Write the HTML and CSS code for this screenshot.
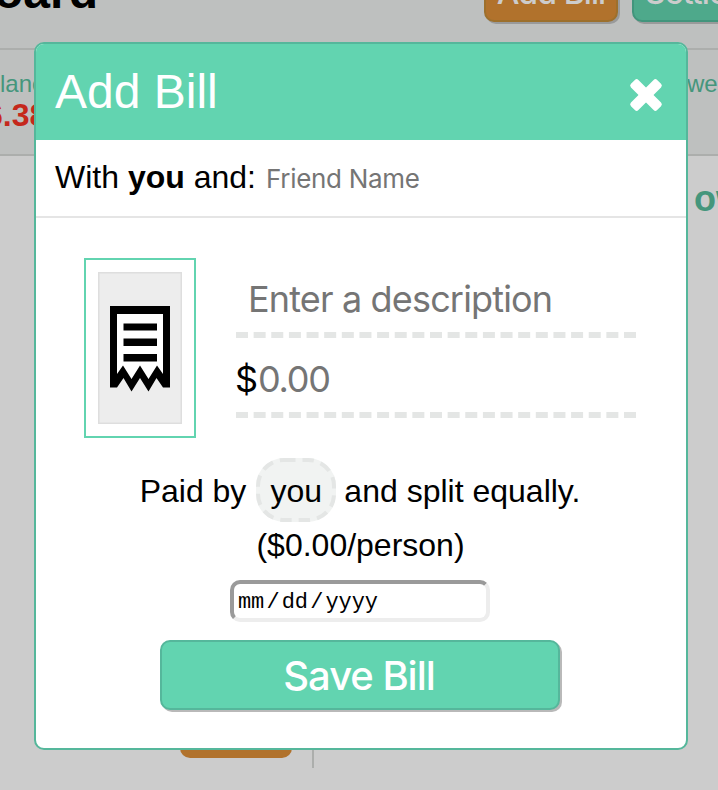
FILE: index.html
```html
<!DOCTYPE html>
<html lang="en">
<head>
<meta charset="utf-8">
<title>Dashboard</title>
<link rel="stylesheet" href="styles.css">
</head>
<body>
<main class="page">
  <header class="topbar">
    <h1 class="page-title">board</h1>
    <div class="actions">
      <span class="btn btn-orange">Add Bill</span>
      <span class="btn btn-green">Settle</span>
    </div>
  </header>
  <section class="summary">
    <div class="balance"><span class="label">lance</span><strong class="amount">6.38</strong></div>
    <span class="label owed">wed</span>
  </section>
  <section class="columns">
    <div class="column column-left"><span class="stub"></span></div>
    <div class="column column-right"><h2 class="column-title">ow</h2></div>
  </section>
</main>
<div class="modal">
  <header class="modal-head">
    <span class="modal-title">Add Bill</span>
    <svg class="close" viewBox="-16 -16 32 32"><rect x="-18.5" y="-5.25" width="37" height="10.5" rx="2.5" transform="rotate(45)"/><rect x="-18.5" y="-5.25" width="37" height="10.5" rx="2.5" transform="rotate(-45)"/></svg>
  </header>
  <div class="with-row">
    <span class="with">With <b>you</b> and:</span>
    <span class="friend">Friend Name</span>
  </div>
  <div class="bill">
    <div class="receipt">
      <svg class="receipt-image" viewBox="0 0 84 152">
        <rect class="plate" x=".75" y=".75" width="82.5" height="150.5"/>
        <path class="paper" d="M15.5 38V110H17L24.5 99L33 113L41.5 99L50 113L58.500 99L66 110H68V38Z"/>
        <path class="ink" fill-rule="evenodd" d="M12 34H72V115.500H65L58.500 106L50.500 119.500L42 106L33.500 119.500L25.500 106L19 115.500H12ZM19 42V102L25 93.500L33.500 107L42 93.500L50.500 107L59 93.500L65 102V42Z"/>
        <path class="ink" d="M25.500 51.500H59V58.500H25.500ZM25.500 66.500H59V74H25.500ZM25.500 82H59V89.500H25.500Z"/>
      </svg>
    </div>
    <div class="fields">
      <div class="field description"><span class="field-text">Enter a description</span><svg class="dashes"><path d="M0 3H400"/></svg></div>
      <div class="field cost"><span class="dollar">$</span><span class="zero">0.00</span><svg class="dashes"><path d="M0 3H400"/></svg></div>
    </div>
  </div>
  <div class="split"><span>Paid by</span><span class="payer"><svg class="payer-outline" viewBox="0 0 80 64"><rect class="payer-fill" width="80" height="64" rx="28"/><rect class="payer-dashes" x="2" y="2" width="76" height="60" rx="26"/></svg><span class="payer-name">you</span></span><span>and split equally.</span></div>
  <div class="share">($0.00/person)</div>
  <div class="date"><span>mm</span><i>/</i><span>dd</span><i>/</i><span>yyyy</span></div>
  <div class="save">Save Bill</div>
</div>
</body>
</html>
```
FILE: styles.css
```css
* { box-sizing: border-box; }
body {
  margin: 0;
  width: 718px;
  height: 790px;
  overflow: hidden;
  background: #ccc;
  color: #000;
  font-family: "Liberation Sans", Arial, sans-serif;
}
.page { height: 790px; overflow: hidden; white-space: nowrap; }
.topbar {
  height: 50px;
  display: flex;
  justify-content: space-between;
  background: #bec0bf;
  border-bottom: 2px solid #acaeac;
}
.page-title {
  width: 98px;
  margin: -36px 0 0;
  display: flex;
  justify-content: flex-end;
  font-size: 48px;
  line-height: 56px;
}
.actions { width: 234px; display: flex; gap: 14px; }
.btn {
  flex: none;
  width: 134px;
  height: 66px;
  margin-top: -44px;
  border: 2px solid;
  border-radius: 10px;
  box-shadow: 1px 1px 0 1px #999a9a;
  color: #ccc;
  font: 500 32px/70px Inter, sans-serif;
  letter-spacing: -.9px;
  text-align: center;
}
.btn-orange { background: #b1722c; border-color: #9d702c; }
.btn-green {
  padding-left: 11px;
  text-align: left;
  background: #4ea98b;
  border-color: #42957c;
}
.btn, .save { box-shadow: 2px 2px 0 #999a9a; }
.summary {
  height: 106px;
  display: flex;
  justify-content: space-between;
  padding-top: 20px;
  background: #bec0bf;
  border-bottom: 2px solid #acaeac;
}
.balance { width: 80px; display: flex; flex-direction: column; }
.label { color: #45967c; font-size: 24px; line-height: 28px; }
.amount {
  margin-left: -15px;
  color: #c5281c;
  font-size: 32px;
  line-height: 34px;
}
.owed { width: 31px; }
.columns { height: 612px; display: flex; align-items: flex-start; }
.column-left {
  width: 314px;
  height: 612px;
  display: flex;
  align-items: flex-end;
  padding: 0 20px 10px 180px;
  border-right: 2px solid #acaeac;
}
.stub {
  width: 112px;
  height: 40px;
  margin-bottom: 0;
  background: #b1722c;
  border-radius: 10px;
}
.column-right { flex: 1; display: flex; justify-content: flex-end; }
.column-title {
  width: 24px;
  margin: 23px 0 0;
  color: #45967c;
  font-size: 36px;
  line-height: 40px;
}
.modal {
  position: absolute;
  left: 34px;
  top: 42px;
  width: 654px;
  height: 708px;
  display: flex;
  flex-direction: column;
  overflow: hidden;
  background: #fff;
  border: 2px solid #55b79b;
  border-radius: 10px;
  white-space: nowrap;
}
.modal-head {
  height: 96px;
  display: flex;
  justify-content: space-between;
  align-items: flex-start;
  padding: 20px 24px 0 19px;
  background: #62d4b0;
}
.modal-title { color: #fff; font-size: 48px; line-height: 56px; }
.close { width: 32px; height: 32px; margin-top: 15px; overflow: visible; fill: #fff; }
.with-row {
  height: 78px;
  display: flex;
  align-items: baseline;
  gap: 10px;
  padding: 19px 0 0 19px;
  border-bottom: 2px solid #e5e5e5;
}
.with { font-size: 32px; line-height: 36px; }
.friend { color: #757575; font: 26px/32px Inter, sans-serif; letter-spacing: -.3px; }
.bill { display: flex; gap: 40px; padding: 40px 0 0 48px; }
.receipt { width: 112px; height: 180px; padding: 12px; border: 2px solid #62d4b0; }
.receipt-image { display: block; width: 84px; height: 152px; }
.plate { fill: #ededed; stroke: #dedede; stroke-width: 1.5; }
.paper { fill: #fff; }
.ink { fill: #000; }
.fields { width: 400px; }
.field {
  height: 80px;
  display: flex;
  flex-wrap: wrap;
  align-content: flex-end;
  color: #757575;
  font: 36px/44px Inter, sans-serif;
  letter-spacing: -.84px;
}
.field > span { margin-top: -2px; }
.field .field-text { margin-left: 12px; }
.dollar { width: 23px; margin-left: -1px; color: #000; }
.zero { letter-spacing: -1.2px; }
.dashes { width: 400px; height: 6px; margin-top: 11px; }
.dashes path { stroke: #e4e6e5; stroke-width: 6; stroke-dasharray: 12 5.636; }
.split {
  height: 64px;
  display: flex;
  justify-content: center;
  gap: 9px;
  margin-top: 20px;
  padding-right: 2px;
  font-size: 32px;
  line-height: 66px;
}
.payer {
  width: 80px;
  height: 64px;
  display: grid;
  grid-template-rows: 64px;
  justify-items: center;
  margin: 0 -1px 0 1px;
}
.payer > * { grid-area: 1 / 1; }
.payer-outline { width: 80px; height: 64px; }
.payer-fill { fill: #f1f3f2; }
.payer-dashes { fill: none; stroke: #e4e6e5; stroke-width: 4; stroke-dasharray: 11.5 7; }
.share {
  height: 58px;
  padding-right: 1px;
  font-size: 32px;
  line-height: 46px;
  text-align: center;
}
.date {
  align-self: center;
  width: 260px;
  height: 42px;
  display: flex;
  margin-right: 2px;
  padding: 2px 0 0 4px;
  border: 4px solid;
  border-color: #9a9a9a #ededed #ededed #9a9a9a;
  border-radius: 10px;
  font: 22px/34px "Liberation Mono", monospace;
  letter-spacing: -.1px;
}
.date i { width: 17.5px; font-style: normal; text-align: center; }
.save {
  align-self: center;
  width: 400px;
  height: 70px;
  margin: 18px 2px 0 0;
  padding-right: 2px;
  background: #62d4b0;
  border: 2px solid #55b79b;
  border-radius: 10px;
  box-shadow: 2px 2px 0 #b9b9b9;
  color: #fff;
  font: 500 40px/68px Inter, sans-serif;
  letter-spacing: -1.05px;
  text-align: center;
}
```
